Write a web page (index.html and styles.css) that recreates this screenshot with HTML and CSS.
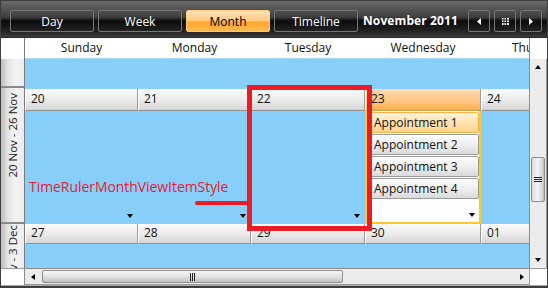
FILE: index.html
```html
<!DOCTYPE html>
<html>
<head>
<meta charset="utf-8">
<link rel="stylesheet" href="styles.css">
</head>
<body>
<div class="scheduler">
  <div class="toolbar">
    <button class="tb-btn">Day</button>
    <button class="tb-btn">Week</button>
    <button class="tb-btn active">Month</button>
    <button class="tb-btn">Timeline</button>
    <span class="title">November 2011</span>
    <button class="nav-btn first"><svg width="4" height="7" viewBox="0 0 4 7"><path d="M4 0L0 3.5L4 7Z" fill="#fff"/></svg></button>
    <button class="nav-btn"><svg width="7" height="7" viewBox="0 0 7 7"><path d="M0 0h7v7h-7z" fill="#fff"/><path d="M2 0v7M4.5 0v7M0 2h7M0 4.5h7" stroke="#222" stroke-width="1"/></svg></button>
    <button class="nav-btn"><svg width="4" height="7" viewBox="0 0 4 7"><path d="M0 0L4 3.5L0 7Z" fill="#fff"/></svg></button>
  </div>

  <div class="corner"></div>
  <div class="dayheads">
    <div class="cols">
      <div class="dayname">Sunday</div>
      <div class="dayname">Monday</div>
      <div class="dayname">Tuesday</div>
      <div class="dayname">Wednesday</div>
      <div class="dayname last">Thursday</div>
    </div>
  </div>
  <div class="vs-head"></div>

  <div class="ruler">
    <div class="ruler-cell r1"></div>
    <div class="ruler-cell r2"><span class="rtext">20 Nov - 26 Nov</span></div>
    <div class="ruler-cell r3"><span class="rtext">27 Nov - 3 Dec</span></div>
  </div>

  <div class="body">
    <div class="week w1"></div>
    <div class="week cols w2">
      <div class="day"><div class="dhead">20</div><div class="dbody"><span class="drop"></span></div></div>
      <div class="day"><div class="dhead">21</div><div class="dbody"><span class="drop"></span></div></div>
      <div class="day"><div class="dhead">22</div><div class="dbody"><span class="drop"></span></div></div>
      <div class="day today"><div class="dhead">23</div><div class="dbody">
        <div class="appt sel">Appointment 1</div>
        <div class="appt">Appointment 2</div>
        <div class="appt">Appointment 3</div>
        <div class="appt">Appointment 4</div>
        <span class="drop"></span>
      </div></div>
      <div class="day"><div class="dhead">24</div><div class="dbody"></div></div>
    </div>
    <div class="week cols w3">
      <div class="day"><div class="dhead">27</div><div class="dbody"></div></div>
      <div class="day"><div class="dhead">28</div><div class="dbody"></div></div>
      <div class="day"><div class="dhead">29</div><div class="dbody"></div></div>
      <div class="day"><div class="dhead">30</div><div class="dbody"></div></div>
      <div class="day"><div class="dhead">01</div><div class="dbody"></div></div>
    </div>
  </div>

  <div class="vscroll">
    <span class="arr up"></span>
    <div class="vtrack">
      <div class="vthumb"><span class="grip-h"></span></div>
    </div>
    <span class="arr down"></span>
  </div>

  <div class="hs-left"></div>
  <div class="hscroll">
    <span class="arr left"></span>
    <div class="htrack">
      <div class="hthumb"><span class="grip-v"></span></div>
    </div>
    <span class="arr right"></span>
  </div>
  <div class="hs-corner"></div>
  <div class="footer"></div>

  <div class="note-label">TimeRulerMonthViewItemStyle</div>
  <div class="note-line"></div>
  <div class="note-box"></div>
</div>
</body>
</html>
```

FILE: styles.css
```css
* { box-sizing: border-box; }
html, body { margin: 0; padding: 0; background: #fff; }
body { font-family: "Open Sans", "Noto Sans", sans-serif; font-size: 12px; color: #000; }

.scheduler {
  position: relative;
  width: 548px;
  height: 288px;
  border: 1px solid #3e3e3e;
  border-bottom-width: 2px;
  display: grid;
  grid-template-columns: 24px 504px 18px;
  grid-template-rows: 37px 21px 209px 17px 1px;
  overflow: hidden;
}

/* toolbar */
.toolbar {
  grid-column: 1 / 4;
  display: flex;
  align-items: flex-start;
  padding: 9px 5px 0 9px;
  background: linear-gradient(#6a6a6a 0%, #3e3e3e 45%, #0c0c0c 55%, #1f1f1f 80%, #3a3a3a 100%);
  border-bottom: 1px solid #2a2a2a;
}
.tb-btn {
  width: 84px;
  height: 22px;
  margin-right: 4px;
  border: 1px solid #767676;
  border-radius: 2px;
  background: transparent;
  color: #fff;
  font-family: inherit;
  font-size: 12px;
  padding: 0;
  line-height: 19px;
}
.tb-btn.active {
  background: linear-gradient(#ffe2b8 0%, #ffcb83 48%, #ffa631 55%, #ffb850 100%);
  border-color: #ffcd7f;
  color: #000;
}
.title {
  margin-left: 1px;
  color: #fff;
  font-weight: 700;
  font-size: 12px;
  line-height: 22px;
  letter-spacing: 0.1px;
}
.nav-btn {
  width: 22px;
  height: 22px;
  margin-left: 4px;
  border: 1px solid #767676;
  border-radius: 2px;
  background: transparent;
  padding: 0;
  display: flex;
  align-items: center;
  justify-content: center;
}
.nav-btn.first { margin-left: auto; }
.nav-btn svg { display: block; }

/* header row */
.corner {
  background: #fff;
  border-right: 1px solid #7b7b7b;
}
.dayheads {
  background: #fff;
  overflow: hidden;
  border-bottom: 1px solid #a9d4ee;
  min-width: 0;
}
.cols {
  display: grid;
  grid-template-columns: 113px 113px 114px 116px 113px;
}
.dayname {
  text-align: center;
  line-height: 20px;
  color: #111;
  white-space: nowrap;
  overflow: hidden;
}
.dayname.last { text-align: left; padding-left: 31px; }
.vs-head {
  background: #fff;
  border-left: 1px solid #8c8c8c;
}

/* ruler */
.ruler {
  display: flex;
  flex-direction: column;
  overflow: hidden;
}
.ruler-cell {
  flex: none;
  background: linear-gradient(to right, #bcbcbc 0%, #e4e4e4 30%, #f3f3f3 60%, #ececec 100%);
  border-right: 1px solid #7b7b7b;
  border-bottom: 2px solid #8a8a8a;
  display: flex;
  justify-content: center;
  align-items: flex-start;
  overflow: hidden;
  color: #222;
}
.r1 { height: 29px; }
.r2 { height: 136px; padding-top: 5px; }
.r3 { height: 44px; border-bottom: 0; padding-top: 1px; }
.rtext {
  writing-mode: vertical-rl;
  transform: rotate(180deg);
  white-space: nowrap;
  line-height: 18px;
  font-size: 11.5px;
}

/* body */
.body {
  background: #87cefa;
  overflow: hidden;
  display: flex;
  flex-direction: column;
  min-width: 0;
}
.week { flex: none; }
.w1 { height: 29px; }
.w2 { height: 136px; }
.w3 { height: 44px; }
.day {
  display: flex;
  flex-direction: column;
  min-width: 0;
}
.dhead {
  flex: none;
  height: 22px;
  margin-top: 1px;
  padding-left: 5px;
  line-height: 20px;
  background: linear-gradient(#fbfbfb 0%, #ececec 50%, #d6d6d6 100%);
  border-left: 1px solid #ffffff;
  border-right: 1px solid #9c9c9c;
  border-bottom: 1px solid #8f8f8f;
  color: #111;
}
.w3 .dhead { height: 20px; margin-top: 0; line-height: 18px; }
.today .dhead {
  background: linear-gradient(#ffdcb2 0%, #ffc888 50%, #ffb14c 100%);
  border-bottom-color: #d49a4a;
}
.dbody {
  flex: 1;
  display: flex;
  flex-direction: column;
  min-height: 0;
}
.today .dbody {
  background: #fff;
  border: 2px solid #ffc62b;
  border-top: 0;
  padding: 1px 0 0 3px;
}
.appt {
  height: 21px;
  margin-bottom: 1px;
  padding-left: 3px;
  line-height: 19px;
  background: linear-gradient(#fdfdfd 0%, #efefef 50%, #dadada 100%);
  border: 1px solid #9a9a9a;
  border-radius: 2px;
  color: #111;
  white-space: nowrap;
}
.appt.sel {
  background: linear-gradient(#fff3dc 0%, #ffe3b0 50%, #ffd38a 100%);
  border-color: #f0b54a;
}
.drop {
  margin-top: auto;
  align-self: flex-end;
  width: 0;
  height: 0;
  border-left: 3.5px solid transparent;
  border-right: 3.5px solid transparent;
  border-top: 4px solid #000;
  margin-right: 5px;
  margin-bottom: 6px;
}
.today .drop { margin-right: 4px; margin-bottom: 5px; }

/* vertical scrollbar */
.vscroll {
  background: #ececec;
  border-left: 1px solid #8c8c8c;
  border-right: 1px solid #9a9a9a;
  display: flex;
  flex-direction: column;
  align-items: center;
}
.arr { width: 0; height: 0; flex: none; }
.arr.up {
  margin-top: 6px;
  border-left: 3.5px solid transparent;
  border-right: 3.5px solid transparent;
  border-bottom: 4px solid #000;
}
.arr.down {
  margin-bottom: 6px;
  border-left: 3.5px solid transparent;
  border-right: 3.5px solid transparent;
  border-top: 4px solid #000;
}
.vtrack {
  flex: 1;
  width: 100%;
  padding-top: 88px;
}
.vthumb {
  height: 45px;
  margin: 0 1px;
  border: 1px solid #8e8e8e;
  border-radius: 2px;
  background: linear-gradient(to right, #d9d9d9, #f5f5f5 45%, #dcdcdc 80%, #bdbdbd);
  display: flex;
  align-items: center;
  justify-content: center;
}
.grip-h {
  width: 8px;
  height: 5px;
  border-top: 1px solid #222;
  border-bottom: 1px solid #222;
  background: linear-gradient(transparent 1px, #222 1px, #222 2px, transparent 2px);
}

/* horizontal scrollbar */
.hs-left {
  background: #fff;
  border-top: 1px solid #9a9a9a;
  border-right: 1px solid #8c8c8c;
}
.hscroll {
  background: #ececec;
  border-top: 1px solid #8c8c8c;
  border-bottom: 1px solid #9a9a9a;
  display: flex;
  align-items: center;
  padding: 0 5px 0 6px;
}
.arr.left {
  border-top: 3.5px solid transparent;
  border-bottom: 3.5px solid transparent;
  border-right: 4px solid #000;
}
.arr.right {
  border-top: 3.5px solid transparent;
  border-bottom: 3.5px solid transparent;
  border-left: 4px solid #000;
}
.htrack {
  flex: 1;
  height: 100%;
  padding: 1px 0 1px 7px;
}
.hthumb {
  width: 301px;
  height: 100%;
  border: 1px solid #8e8e8e;
  border-radius: 2px;
  background: linear-gradient(#f5f5f5, #e6e6e6 45%, #cfcfcf 80%, #bdbdbd);
  display: flex;
  align-items: center;
  justify-content: center;
}
.grip-v {
  width: 5px;
  height: 8px;
  border-left: 1px solid #222;
  border-right: 1px solid #222;
  background: linear-gradient(to right, transparent 1px, #222 1px, #222 2px, transparent 2px);
}
.hs-corner {
  background: #fff;
  border-top: 1px solid #9a9a9a;
  border-left: 1px solid #9a9a9a;
}
.footer {
  grid-column: 1 / 4;
  background: #a8a8a8;
}

/* annotation overlay */
.note-label {
  position: absolute;
  left: 28px;
  top: 176px;
  color: #e4202e;
  font-size: 13.9px;
  white-space: nowrap;
}
.note-line {
  position: absolute;
  left: 194px;
  top: 200px;
  width: 56px;
  height: 4px;
  background: #ec1c24;
  border-radius: 2px 0 0 2px;
}
.note-box {
  position: absolute;
  left: 246px;
  top: 84px;
  width: 125px;
  height: 146px;
  border: 5px solid #ec1c24;
}
```
